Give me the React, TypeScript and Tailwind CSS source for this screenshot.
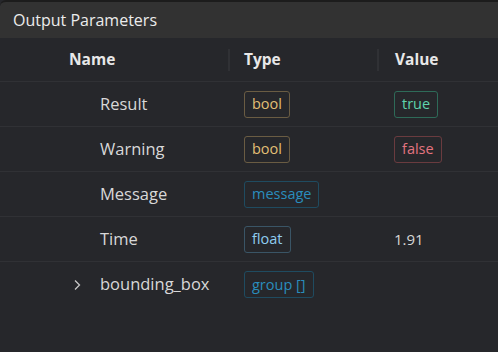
import React from "react";

type Row = {
  name: string;
  type: string;
  typeCls: string;
  value?: React.ReactNode;
  expandable?: boolean;
};

const rows: Row[] = [
  {
    name: "Result",
    type: "bool",
    typeCls: "text-[#e2bf75] border-[#6a5c43]",
    value: (
      <span className="inline-flex h-[27px] items-center rounded-[3px] border border-[#2e6a58] px-[7px] text-[14.5px] text-[#5fd4ac]">
        true
      </span>
    ),
  },
  {
    name: "Warning",
    type: "bool",
    typeCls: "text-[#e2bf75] border-[#6a5c43]",
    value: (
      <span className="inline-flex h-[27px] items-center rounded-[3px] border border-[#6a3b3f] px-[7px] text-[14.5px] text-[#e37480]">
        false
      </span>
    ),
  },
  {
    name: "Message",
    type: "message",
    typeCls: "text-[#2a8dbd] border-[#1f4b60]",
  },
  {
    name: "Time",
    type: "float",
    typeCls: "text-[#8fcdf0] border-[#3a5566]",
    value: <span className="text-[15px] text-[#d6d6d6]">1.91</span>,
  },
  {
    name: "bounding_box",
    type: "group []",
    typeCls: "text-[#2a8dbd] border-[#1f4b60]",
    expandable: true,
  },
];

export default function App() {
  return (
    <div
      className="w-[498px] h-[352px] bg-[#26272b] overflow-hidden flex flex-col"
      style={{ fontFamily: '"Open Sans", "Noto Sans", sans-serif' }}
    >
      <div className="h-[38px] bg-[#323232] border-t-2 border-[#1c1c1c] rounded-tl-[6px] flex items-center pl-[13px] text-[16px] text-[#ececec]">
        Output Parameters
      </div>
      <div className="grid grid-cols-[228px_149px_1fr] h-[44px] border-b border-[#303135] text-[15.5px] font-bold text-[#e8e8e8]">
        <div className="flex items-center pl-[69px]">Name</div>
        <div className="flex items-center">
          <div className="w-[2px] h-[22px] bg-[#303135] mr-[14px]" />
          Type
        </div>
        <div className="flex items-center">
          <div className="w-[2px] h-[22px] bg-[#303135] mr-[16px]" />
          Value
        </div>
      </div>
      {rows.map((r, i) => (
        <div
          key={r.name}
          className={`grid grid-cols-[228px_149px_1fr] h-[45px] ${
            i < rows.length - 1 ? "border-b border-[#303135]" : ""
          }`}
        >
          <div className="flex items-center pl-[72px] text-[16.5px] text-[#d8d8d8]">
            <span className="w-[28px] flex items-center">
              {r.expandable && (
                <svg width="10" height="14" viewBox="0 0 10 14" fill="none">
                  <path d="M3 2.5 L7.5 7 L3 11.5" stroke="#c8c8c8" strokeWidth="1.3" />
                </svg>
              )}
            </span>
            {r.name}
          </div>
          <div className="flex items-center pl-[16px]">
            <span
              className={`inline-flex h-[27px] items-center rounded-[3px] border px-[7px] text-[14.5px] ${r.typeCls}`}
            >
              {r.type}
            </span>
          </div>
          <div className="flex items-center pl-[17px]">{r.value}</div>
        </div>
      ))}
    </div>
  );
}
